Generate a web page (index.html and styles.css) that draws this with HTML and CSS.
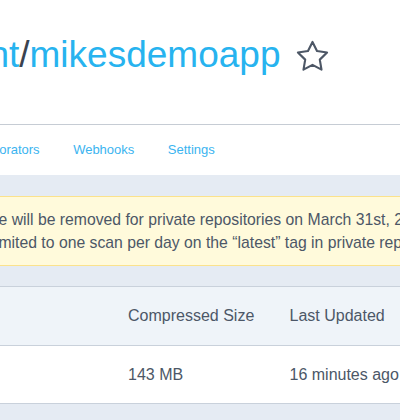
FILE: index.html
```html
<!DOCTYPE html>
<html lang="en">
<head>
<meta charset="utf-8">
<title>mikesdemoapp</title>
<link rel="stylesheet" href="styles.css">
</head>
<body>
<div class="page">
  <header class="repo-header">
    <div class="title-row">
      <h1 class="repo-title"><span class="ns">mikesdemoaccount</span><span class="sep">/</span><span class="repo">mikesdemoapp</span></h1>
      <svg class="star" width="35" height="35" viewBox="0 0 24 24" aria-hidden="true">
        <polygon points="12,2 15.09,8.26 22,9.27 17,14.14 18.18,21.02 12,17.77 5.82,21.02 7,14.14 2,9.27 8.91,8.26" fill="none" stroke="#4d5766" stroke-width="1.45" stroke-linejoin="round"/>
      </svg>
    </div>
  </header>
  <nav class="tabs">
    <a class="tab">General</a>
    <a class="tab">Tags</a>
    <a class="tab">Builds</a>
    <a class="tab">Timeline</a>
    <a class="tab">Collaborators</a>
    <a class="tab">Webhooks</a>
    <a class="tab">Settings</a>
  </nav>
  <main class="content">
    <div class="notice-wrap">
      <div class="notice">
        <p class="notice-text">The free feature will be removed for private repositories on March 31st, 2021.<br>Scans will be limited to one scan per day on the “latest” tag in private repositories.</p>
      </div>
    </div>
    <div class="tag-table">
      <div class="thead">
        <div class="cell">Tag</div>
        <div class="cell">Compressed Size</div>
        <div class="cell">Last Updated</div>
      </div>
      <div class="trow">
        <div class="cell">latest</div>
        <div class="cell">143 MB</div>
        <div class="cell">16 minutes ago</div>
      </div>
    </div>
  </main>
</div>
</body>
</html>
```
FILE: styles.css
```css
html, body {
  margin: 0;
  padding: 0;
  overflow: hidden;
  background: #e5ebf3;
  font-family: "Liberation Sans", Arial, sans-serif;
}

.page {
  width: 1100px;
  margin-left: -340px;
}

.repo-header {
  box-sizing: border-box;
  height: 125px;
  padding: 35px 0 0 40.5px;
  background: #ffffff;
  border-bottom: 1px solid #c6ccd4;
}

.title-row {
  display: flex;
  align-items: flex-start;
  gap: 15px;
}

.repo-title {
  margin: 0;
  font-size: 37px;
  font-weight: normal;
  line-height: 40px;
  color: #27b3ef;
  white-space: nowrap;
}

.sep {
  color: #3a4350;
}

.star {
  display: block;
  margin-top: 4px;
}

.tabs {
  display: flex;
  gap: 33.5px;
  height: 50px;
  padding-left: 10.5px;
  background: #ffffff;
  font-size: 13px;
  line-height: 50px;
}

.tab {
  color: #3bb4f0;
  white-space: nowrap;
  cursor: pointer;
}

.notice-wrap {
  padding: 21px 0 20px 20px;
}

.notice {
  background: #fffadb;
  border: 1px solid #fbe28c;
  padding: 10.6px 0 10.6px 214.2px;
}

.notice-text {
  margin: 0;
  font-size: 15.75px;
  line-height: 23.4px;
  color: #4c5767;
  white-space: nowrap;
}

.tag-table {
  margin-left: 20px;
  background: #ffffff;
  border-top: 1px solid #c9d1db;
  border-bottom: 1px solid #c9d1db;
  font-size: 16px;
  color: #4c5767;
}

.thead,
.trow {
  display: grid;
  grid-template-columns: 433px 161.5px 1fr;
  align-items: center;
}

.thead {
  height: 58px;
  background: #eff4f9;
  border-bottom: 1px solid #c9d1db;
}

.trow {
  height: 57px;
}

.cell {
  padding: 0 15px;
  white-space: nowrap;
}
```
